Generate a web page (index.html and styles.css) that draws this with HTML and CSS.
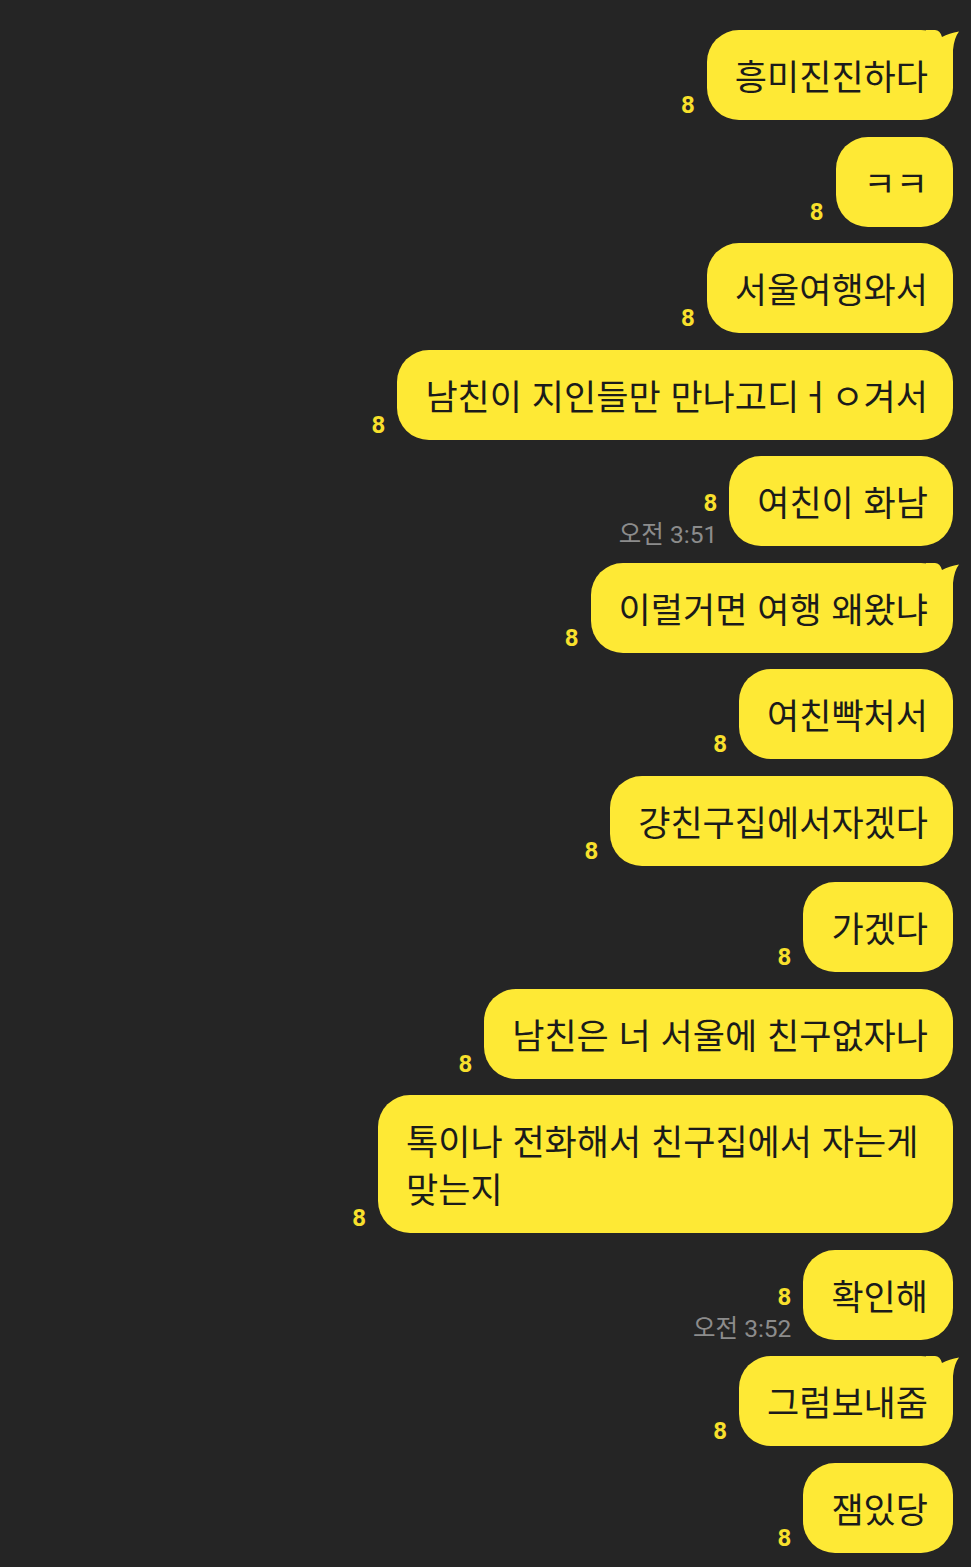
FILE: index.html
```html
<!DOCTYPE html>
<html lang="ko">
<head>
<meta charset="utf-8">
<title>Chat</title>
<link rel="stylesheet" href="styles.css">
</head>
<body>
<main class="chat">
  <div class="row">
    <div class="meta"><span class="count">8</span></div>
    <div class="bubble">흥미진진하다<svg class="tail" viewBox="0 0 33 34" aria-hidden="true"><path d="M0 0 H9 Q14 0 16 7 Q23 3 33 1.5 Q28 8 27 20 V34 H0 Z"/></svg></div>
  </div>
  <div class="row">
    <div class="meta"><span class="count">8</span></div>
    <div class="bubble">ㅋㅋ</div>
  </div>
  <div class="row">
    <div class="meta"><span class="count">8</span></div>
    <div class="bubble">서울여행와서</div>
  </div>
  <div class="row">
    <div class="meta"><span class="count">8</span></div>
    <div class="bubble">남친이 지인들만 만나고디ㅓㅇ겨서</div>
  </div>
  <div class="row">
    <div class="meta"><span class="count">8</span><span class="time">오전 3:51</span></div>
    <div class="bubble">여친이 화남</div>
  </div>
  <div class="row">
    <div class="meta"><span class="count">8</span></div>
    <div class="bubble">이럴거면 여행 왜왔냐<svg class="tail" viewBox="0 0 33 34" aria-hidden="true"><path d="M0 0 H9 Q14 0 16 7 Q23 3 33 1.5 Q28 8 27 20 V34 H0 Z"/></svg></div>
  </div>
  <div class="row">
    <div class="meta"><span class="count">8</span></div>
    <div class="bubble">여친빡처서</div>
  </div>
  <div class="row">
    <div class="meta"><span class="count">8</span></div>
    <div class="bubble">걍친구집에서자겠다</div>
  </div>
  <div class="row">
    <div class="meta"><span class="count">8</span></div>
    <div class="bubble">가겠다</div>
  </div>
  <div class="row">
    <div class="meta"><span class="count">8</span></div>
    <div class="bubble">남친은 너 서울에 친구없자나</div>
  </div>
  <div class="row">
    <div class="meta"><span class="count">8</span></div>
    <div class="bubble">톡이나 전화해서 친구집에서 자는게 맞는지</div>
  </div>
  <div class="row">
    <div class="meta"><span class="count">8</span><span class="time">오전 3:52</span></div>
    <div class="bubble">확인해</div>
  </div>
  <div class="row">
    <div class="meta"><span class="count">8</span></div>
    <div class="bubble">그럼보내줌<svg class="tail" viewBox="0 0 33 34" aria-hidden="true"><path d="M0 0 H9 Q14 0 16 7 Q23 3 33 1.5 Q28 8 27 20 V34 H0 Z"/></svg></div>
  </div>
  <div class="row">
    <div class="meta"><span class="count">8</span></div>
    <div class="bubble">잼있당</div>
  </div>
</main>
</body>
</html>
```
FILE: styles.css
```css
html, body {
  margin: 0;
  padding: 0;
  background: #252525;
}

body {
  min-height: 1567px;
  font-family: "Noto Sans CJK KR", "Noto Sans", sans-serif;
}

.chat {
  display: flex;
  flex-direction: column;
  align-items: flex-end;
  gap: 16.5px;
  padding: 30px 18px 0 0;
}

.row {
  display: flex;
  flex-direction: row;
  align-items: flex-end;
  gap: 12px;
}

.meta {
  display: flex;
  flex-direction: column;
  align-items: flex-end;
}

.count {
  font-family: Roboto, "Liberation Sans", sans-serif;
  font-weight: 700;
  font-size: 24px;
  line-height: 23px;
  color: #f8e02c;
  margin-bottom: 3px;
}

.time {
  font-family: Roboto, "Noto Sans CJK KR", sans-serif;
  font-size: 24.5px;
  line-height: 23px;
  color: #8c8c8c;
  white-space: nowrap;
}

.count + .time {
  margin-top: 5px;
}

.bubble {
  position: relative;
  box-sizing: border-box;
  max-width: 575px;
  padding: 21px 25px 21px 28px;
  background: #fee935;
  color: #1b1b1b;
  border-radius: 32px;
  font-size: 35px;
  line-height: 48px;
  word-break: keep-all;
}

.tail {
  position: absolute;
  top: 0;
  right: -6px;
  width: 33px;
  height: 34px;
  fill: #fee935;
}
```
